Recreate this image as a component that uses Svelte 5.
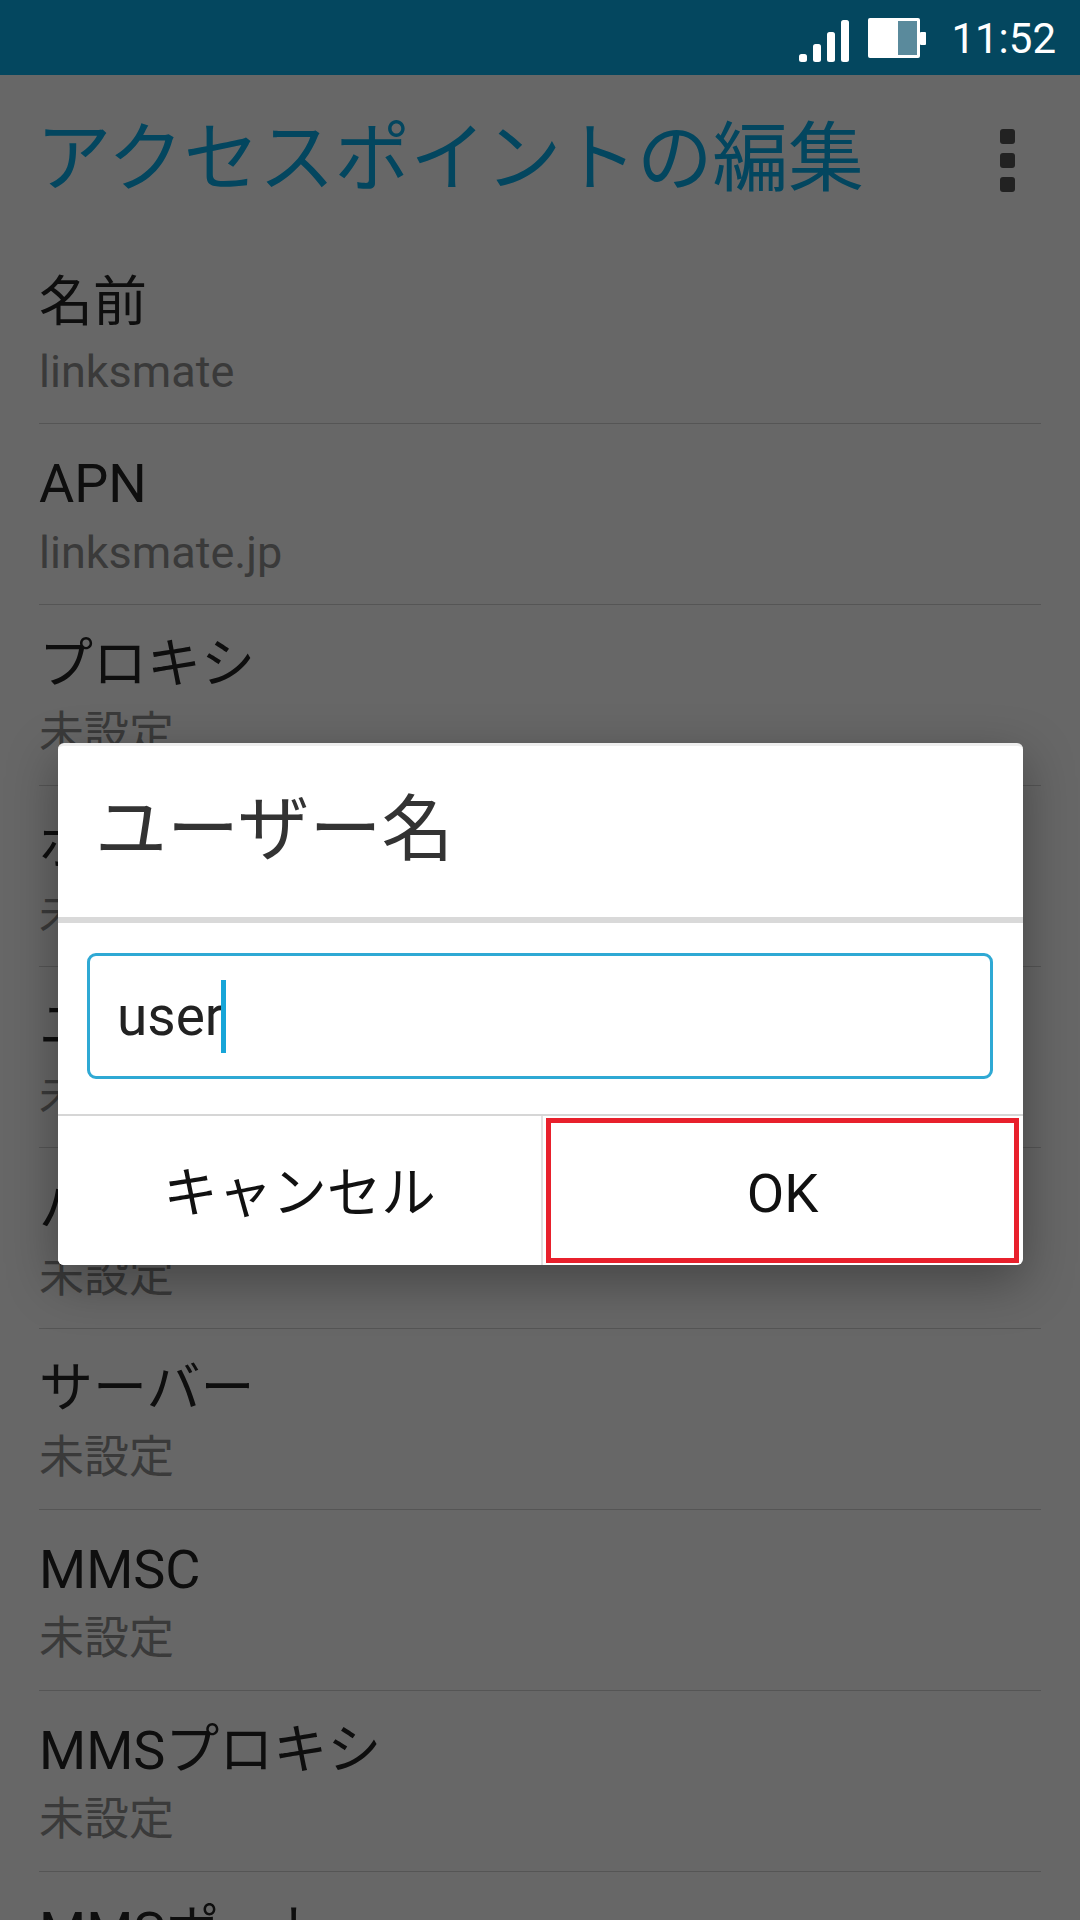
<script>
  const rows = [
    ['名前', 'linksmate'],
    ['APN', 'linksmate.jp'],
    ['プロキシ', '未設定'],
    ['ポート', '未設定'],
    ['ユーザー名', '未設定'],
    ['パスワード', '未設定'],
    ['サーバー', '未設定'],
    ['MMSC', '未設定'],
    ['MMSプロキシ', '未設定'],
    ['MMSポート', '未設定']
  ];
</script>

<div class="screen">
  <header class="status">
    <svg class="signal" width="50" height="42" viewBox="0 0 50 42" aria-hidden="true">
      <rect x="0" y="34" width="8" height="8" rx="2.5" />
      <rect x="14" y="24" width="8" height="18" rx="2.5" />
      <rect x="28" y="12" width="8" height="30" rx="2.5" />
      <rect x="42" y="0" width="8" height="42" rx="2.5" />
    </svg>
    <svg class="battery" width="58" height="40" viewBox="0 0 58 40" aria-hidden="true">
      <rect x="0" y="0" width="52" height="40" rx="2" fill="#fff" />
      <rect x="30" y="3" width="19" height="34" fill="#5a8a9c" />
      <rect x="52" y="14" width="6" height="13" rx="1" fill="#fff" />
    </svg>
    <span class="time">11:52</span>
  </header>

  <div class="body">
    <div class="appbar">
      <h1>アクセスポイントの編集</h1>
      <div class="menu"><i></i><i></i><i></i></div>
    </div>
    <ul class="list">
      {#each rows as [label, value]}
        <li>
          <span class="label">{label}</span>
          <span class="value">{value}</span>
        </li>
      {/each}
    </ul>

    <div class="scrim"></div>

    <div class="dialog">
      <div class="dlg-title">ユーザー名</div>
      <div class="dlg-body">
        <div class="field"><span class="typed">user</span><span class="caret"></span></div>
      </div>
      <div class="actions">
        <button class="cancel">キャンセル</button>
        <button class="ok">OK</button>
      </div>
    </div>
  </div>
</div>

<style>
  :global(body) {
    margin: 0;
    background: #fff;
  }
  .screen {
    width: 1080px;
    height: 1920px;
    overflow: hidden;
    display: flex;
    flex-direction: column;
    font-family: Roboto, "Noto Sans CJK JP", sans-serif;
  }
  .status {
    height: 75px;
    flex: none;
    background: #04475f;
    display: flex;
    align-items: flex-start;
    position: relative;
    z-index: 3;
    padding: 18px 24px 0 0;
    box-sizing: border-box;
    justify-content: flex-end;
  }
  .signal {
    fill: #fff;
    margin: 2px 19px 0 0;
  }
  .battery {
    margin-right: 25px;
  }
  .time {
    color: #fff;
    font-size: 42px;
    font-weight: 400;
    line-height: 42px;
  }
  .body {
    position: relative;
    flex: 1;
    background: #fff;
  }
  .appbar {
    height: 168px;
    box-sizing: border-box;
    padding: 0 0 0 36px;
    display: flex;
    align-items: flex-start;
    justify-content: space-between;
  }
  h1 {
    margin: 0;
    padding-top: 36px;
    font-size: 75.6px;
    font-weight: 400;
    line-height: 96px;
    color: #09aeea;
    white-space: nowrap;
  }
  .menu {
    display: flex;
    flex-direction: column;
    gap: 9px;
    padding: 54px 65px 0 0;
  }
  .menu i {
    display: block;
    width: 15px;
    height: 15px;
    border-radius: 3px;
    background: #555;
  }
  .list {
    list-style: none;
    margin: 0 39px 0 39px;
    padding: 0;
  }
  .list li {
    height: 181px;
    box-sizing: border-box;
    border-bottom: 1px solid #d2d2d2;
    padding-top: 18px;
    display: flex;
    flex-direction: column;
  }
  .label {
    font-size: 54px;
    line-height: 84px;
    color: #242424;
  }
  .value {
    font-size: 45px;
    line-height: 54px;
    color: #909090;
  }
  .scrim {
    position: absolute;
    inset: 0;
    background: rgba(0, 0, 0, 0.595);
  }
  .dialog {
    position: absolute;
    left: 58px;
    top: 668px;
    width: 965px;
    height: 522px;
    box-sizing: border-box;
    background: #fff;
    border-top: 3px solid #eee;
    border-radius: 6px;
    box-shadow: 0 16px 50px rgba(0, 0, 0, 0.34);
    display: flex;
    flex-direction: column;
    overflow: hidden;
  }
  .dlg-title {
    flex: none;
    height: 171px;
    box-sizing: border-box;
    padding: 36px 0 0 37px;
    font-size: 72px;
    line-height: 96px;
    color: #333;
  }
  .dlg-body {
    flex: none;
    height: 199px;
    box-sizing: border-box;
    padding: 30px 30px 0 29px;
    border-top: 6px solid #d9d9d9;
    border-bottom: 2px solid #d6d6d6;
  }
  .field {
    height: 126px;
    box-sizing: border-box;
    border: 3px solid #2fa9d4;
    border-radius: 9px;
    display: flex;
    align-items: center;
    padding-left: 27px;
  }
  .typed {
    font-size: 55px;
    color: #222;
  }
  .caret {
    width: 5px;
    height: 73px;
    margin-left: -3px;
    background: #17a5d8;
  }
  .actions {
    flex: 1;
    display: flex;
  }
  button {
    border: 0;
    background: #fff;
    font-family: inherit;
    font-size: 54.5px;
    color: #111;
    padding: 0;
  }
  .cancel {
    flex: none;
    width: 485px;
    border-right: 2px solid #e2e2e2;
    padding-bottom: 4px;
  }
  .ok {
    flex: 1;
    margin: 2px 4px 2px 3px;
    border: 5px solid #e8202c;
    padding-top: 5px;
  }
</style>
